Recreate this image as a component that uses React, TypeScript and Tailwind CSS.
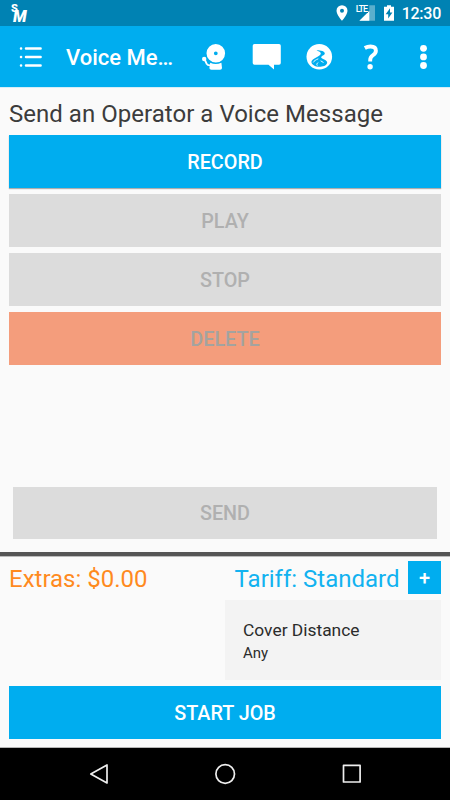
import React from "react";

function StatusBar() {
  return (
    <div className="flex h-[26px] shrink-0 items-center bg-[#0082b3] pl-[9px] pr-[9px] text-white">
      <div className="relative h-[26px] w-[24px]">
        <span className="absolute left-[2px] top-[5px] text-[11px] leading-[8px] font-black">S</span>
        <span className="absolute left-[4px] top-[13px] text-[16px] leading-[8px] font-black italic">M</span>
      </div>
      <svg className="ml-auto mr-[8px] h-[16px] w-[12px]" viewBox="0 0 12 16" fill="currentColor">
        <path fillRule="evenodd" d="M6 .2A5.500 5.500 0 0 0 .5 5.700C.5 9.800 6 15.800 6 15.800s5.500-6 5.500-10.100A5.500 5.500 0 0 0 6 .2Zm0 3.500a2 2 0 1 1 0 4 2 2 0 0 1 0-4Z" />
      </svg>
      <div className="relative mr-[9px] h-[16px] w-[19px]">
        <svg className="h-[16px] w-[19px]" viewBox="0 0 19 16">
          <path d="M19 .2V15.800H3.400L13.300 5.900V.2Z" fill="#5aafcd" />
          <path d="M13.300 5.900V15.800H3.400Z" fill="white" />
        </svg>
        <span className="absolute left-0 top-0 h-[8px] w-[12px] bg-[#0082b3] text-[9px] leading-[9px] font-medium tracking-[-0.900px]">LTE</span>
      </div>
      <svg className="mr-[8px] h-[16px] w-[10px]" viewBox="0 0 10 16" fill="currentColor">
        <path fillRule="evenodd" d="M3 .2h4v1.500h3v14H0v-14h3Zm3 3L1.700 9.300h2.500v4.300L8.400 7.400H6Z" />
      </svg>
      <span className="pt-[2px] text-[16px] leading-[24px] font-medium tracking-[-0.250px]">12:30</span>
    </div>
  );
}

function Toolbar() {
  return (
    <header className="flex h-[61px] shrink-0 items-center bg-[#00adef] text-white">
      <svg className="ml-[18px] h-[30px] w-[26px]" viewBox="18 42 26 30" stroke="currentColor" strokeWidth="2.500" strokeLinecap="round">
        <path d="M26 48.500H40.600M26 57H40.600M26 65.500H40.600" />
        <path d="M21 48.500h.1M21 57h.1M21 65.500h.1" />
      </svg>
      <h1 className="ml-[22px] w-[110px] whitespace-nowrap pt-[2px] text-[22px] leading-[30px] font-medium">Voice Me…</h1>
      <svg className="ml-[24px] h-[32px] w-[28px]" viewBox="200 41 28 32" fill="currentColor">
        <path fillRule="evenodd" d="M215.800 44a9.300 9.300 0 1 1 0 18.600 9.300 9.300 0 0 1 0-18.600Zm0 7.400a1.900 1.900 0 1 0 0 3.800 1.900 1.900 0 0 0 0-3.800Z" />
        <path d="M210.200 62.800q5.600 2.600 11.200 0l.6 5.200q0 1.700-2 1.700h-8.600q-2 0-2-1.700Z" />
        <circle cx="204.200" cy="59" r="2.200" />
        <path d="m204.500 59 2.300 5q.5 1.300 3.400 1.300" fill="none" stroke="currentColor" strokeWidth="1.800" />
      </svg>
      <svg className="ml-[22px] h-[32px] w-[32px]" viewBox="250 41 32 32" fill="currentColor">
        <path d="M254.500 44h24.500q1.800 0 1.800 1.800v17.200q0 1.800-1.800 1.800h-5v4.700l-5.500-4.700h-14q-1.800 0-1.800-1.800V45.800q0-1.800 1.800-1.800Z" />
      </svg>
      <svg className="ml-[22px] h-[32px] w-[30px]" viewBox="304 41 30 32">
        <circle cx="319.300" cy="56.800" r="12.800" fill="white" />
        <path d="M316.500 50.300C321 50.300 325 51.500 324.800 53.600C324.600 55.500 321 56 321.200 57.500C321.500 59 327 59.500 327.200 62.500C327.300 64.800 324 66.500 320.500 66.800C315.500 67.200 311.300 64.500 311.400 61.700C311.500 58.500 321 56 320.800 53.400C320.700 51.800 318 51.300 316.500 50.300Z" fill="#00adef" />
        <path d="M313.200 62.500C314 60.800 316 59.800 318.300 58.800M317.300 65.600C316.300 64.300 317 63.200 318.300 62.500M320.600 60.800L323.500 62.500" stroke="white" strokeWidth=".9" fill="none" />
      </svg>
      <svg className="ml-[26px] h-[32px] w-[22px]" viewBox="360 41 22 32">
        <path d="M364.800 48q2.700-1.500 5.700-1.500 5.400 0 5.400 4.200 0 2.400-3 4.600-2.700 2-2.700 4.700v1.500" fill="none" stroke="white" strokeWidth="3.900" />
        <circle cx="370.100" cy="66.800" r="2.700" fill="white" />
      </svg>
      <svg className="ml-[34px] h-[32px] w-[16px]" viewBox="416 41 16 32" fill="currentColor">
        <circle cx="423.500" cy="48.300" r="3.400" />
        <circle cx="423.500" cy="56.900" r="3.400" />
        <circle cx="423.500" cy="65.500" r="3.400" />
      </svg>
    </header>
  );
}

const base = "flex h-[52.500px] w-full shrink-0 items-center justify-center pt-[3px] text-[19.800px] font-medium ";

export default function App() {
  return (
    <div className="flex h-[800px] w-[450px] flex-col overflow-hidden bg-[#fafafa] font-['Roboto',sans-serif]">
      <StatusBar />
      <Toolbar />
      <main className="flex h-[465px] shrink-0 flex-col border-t border-[#d5edf8] px-[9px]">
        <h2 className="h-[47px] whitespace-nowrap pt-[10px] text-[24px] leading-[33px] tracking-[0.030px] text-[#3c3c3c]">Send an Operator a Voice Message</h2>
        <div className="flex flex-col gap-[6.500px]">
          <button className={base + "bg-[#00adef] text-white shadow-[0_1px_1px_rgba(0,0,0,0.3)]"}>RECORD</button>
          <button className={base + "bg-[#dcdcdc] text-[#b0b0b0]"}>PLAY</button>
          <button className={base + "bg-[#dcdcdc] text-[#b0b0b0]"}>STOP</button>
          <button className={base + "bg-[#f49d7c] text-[#a3a3a0]"}>DELETE</button>
        </div>
        <div className="mt-auto px-[4px] pb-[13px]">
          <button className={base + "bg-[#dcdcdc] text-[#b0b0b0]"}>SEND</button>
        </div>
      </main>
      <div className="h-[5px] shrink-0 border-b border-[#bbbbbb] bg-[#555555]" />
      <section className="flex h-[190px] shrink-0 flex-col px-[9px] pt-[4px]">
        <div className="flex h-[33px] items-center whitespace-nowrap text-[24px] leading-[33px]">
          <span className="pt-[3px] text-[#ff8a1e]">Extras: $0.00</span>
          <span className="ml-auto mr-[8.500px] pt-[3px] text-[#12b2f0]">Tariff: Standard</span>
          <button className="flex h-[33px] w-[33px] items-center justify-center bg-[#00adef] pt-[2px] text-[20px] font-medium text-white">+</button>
        </div>
        <div className="mt-[6px] ml-auto flex h-[80px] w-[216px] flex-col bg-[#f3f3f3] pl-[18px] pt-[19px] text-[#2b2b2b]">
          <span className="text-[17.400px] leading-[23px]">Cover Distance</span>
          <span className="pt-[1px] text-[15px] leading-[21px]">Any</span>
        </div>
        <button className={base + "mt-[6px] bg-[#00adef] text-white"}>START JOB</button>
      </section>
      <nav className="flex h-[53px] shrink-0 items-center border-t border-[#b5b5b5] bg-black pl-[87px]">
        <svg className="h-[24px] w-[24px]" viewBox="87 762 24 24" fill="none" stroke="#eeeeee" strokeWidth="1.700" strokeLinejoin="round"><path d="M107 765v18l-16.200-9Z" /></svg>
        <svg className="ml-[102px] h-[24px] w-[24px]" viewBox="213 762 24 24" fill="none" stroke="#eeeeee" strokeWidth="1.700"><circle cx="225.200" cy="774" r="9.300" /></svg>
        <svg className="ml-[102px] h-[24px] w-[26px]" viewBox="339 762 26 24" fill="none" stroke="#eeeeee" strokeWidth="1.700" strokeLinejoin="round"><path d="M343.500 765.400h16.600v16.600h-16.600Z" /></svg>
      </nav>
    </div>
  );
}
